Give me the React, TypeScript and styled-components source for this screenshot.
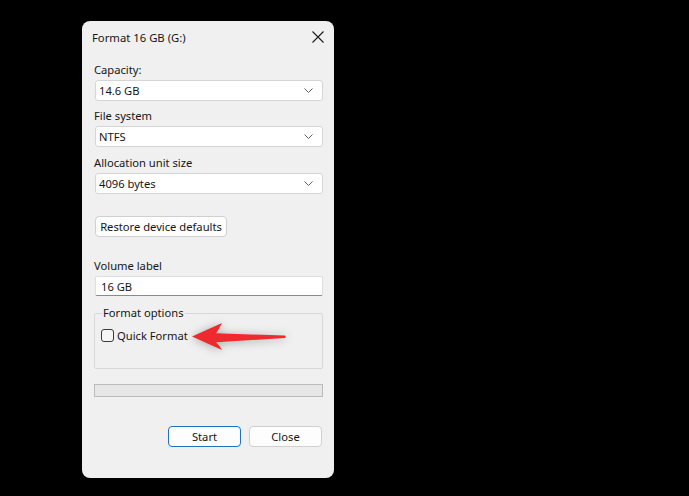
import React from "react";
import styled, { createGlobalStyle } from "styled-components";

const Global = createGlobalStyle`
  html, body { margin: 0; padding: 0; background: #000; }
  body { font-family: "Segoe UI", "Noto Sans", "Open Sans", sans-serif; }
  * { box-sizing: border-box; }
`;

const Page = styled.div`
  position: relative;
  width: 689px;
  height: 496px;
  background: #000;
  padding: 21px 0 0 82px;
`;

const Window = styled.div`
  width: 252px;
  height: 457px;
  background: #f0f0f0;
  border-radius: 8px;
  display: flex;
  flex-direction: column;
  color: #151515;
  font-size: 11.2px;
  overflow: hidden;
`;

const TitleBar = styled.div`
  height: 32px;
  display: flex;
  align-items: center;
  justify-content: space-between;
  padding: 0 10px 0 10px;
  font-size: 11.3px;
  color: #151515;
`;

const CloseGlyph = styled.svg`
  width: 12px;
  height: 12px;
`;

const Body = styled.div`
  display: flex;
  flex-direction: column;
  padding: 0 11px 0 12px;
`;

const Label = styled.div<{ $top: number }>`
  margin-top: ${(p) => p.$top}px;
  height: 16px;
  line-height: 16px;
  white-space: nowrap;
`;

const Combo = styled.div`
  margin-top: 2px;
  margin-left: 1px;
  height: 21px;
  background: #fff;
  border: 1px solid #d5d5d5;
  border-radius: 3px;
  display: flex;
  align-items: center;
  justify-content: space-between;
  padding: 0 9px 0 3px;
`;

const Chevron = styled.svg`
  width: 9px;
  height: 5px;
`;

const SmallButton = styled.button<{ $primary?: boolean; $width: number }>`
  width: ${(p) => p.$width}px;
  height: 21px;
  font: inherit;
  font-size: 11.2px;
  color: #151515;
  background: #fdfdfd;
  border: 1px solid ${(p) => (p.$primary ? "#1f72c0" : "#d0d0d0")};
  border-radius: 4px;
  padding: 0;
  white-space: nowrap;
  display: flex;
  align-items: center;
  justify-content: center;
`;

const RestoreRow = styled.div`
  margin-top: 22px;
  margin-left: 1px;
  display: flex;
`;

const TextInput = styled.div`
  margin-top: 2px;
  margin-left: 1px;
  height: 20px;
  background: #fff;
  border: 1px solid #dedede;
  border-bottom-color: #8a8a8a;
  border-radius: 2px;
  display: flex;
  align-items: center;
  padding-left: 5px;
`;

const GroupBox = styled.fieldset`
  margin: 10px 0 0 0;
  height: 63px;
  border: 1px solid #d8d8d8;
  border-radius: 2px;
  padding: 0 6px;
  display: flex;
  flex-direction: column;
  min-width: 0;
`;

const Legend = styled.legend`
  padding: 0 1px;
  margin-left: 1px;
  line-height: 14px;
`;

const CheckRow = styled.label`
  display: flex;
  align-items: center;
  gap: 3px;
  margin-top: 8px;
`;

const CheckBox = styled.span`
  width: 13px;
  height: 13px;
  border: 1px solid #3a3a3a;
  border-radius: 3px;
  background: #f6f6f6;
`;

const Progress = styled.div`
  margin-top: 15px;
  height: 13px;
  background: #e6e6e6;
  border: 1px solid #bcbcbc;
`;

const Footer = styled.div`
  margin-top: 29px;
  display: flex;
  justify-content: flex-end;
  gap: 8px;
  padding-right: 1px;
`;

const Arrow = styled.svg`
  position: absolute;
  left: 185px;
  top: 315px;
  width: 105px;
  height: 45px;
  overflow: visible;
  filter: drop-shadow(0 1px 5px rgba(0, 0, 0, 0.3));
`;

const ChevronIcon = () => (
  <Chevron viewBox="0 0 9 5">
    <polyline points="0.5,0.5 4.5,4.5 8.5,0.5" fill="none" stroke="#606060" strokeWidth="1" />
  </Chevron>
);

const ComboBox = ({ value }: { value: string }) => (
  <Combo>
    <span>{value}</span>
    <ChevronIcon />
  </Combo>
);

export default function App() {
  return (
    <>
      <Global />
      <Page>
        <Window>
          <TitleBar>
            <span>Format 16 GB (G:)</span>
            <CloseGlyph viewBox="0 0 12 12">
              <path d="M0.5 0.5 L11.5 11.5 M11.5 0.5 L0.5 11.5" stroke="#1b1b1b" strokeWidth="1.1" />
            </CloseGlyph>
          </TitleBar>
          <Body>
            <Label $top={9}>Capacity:</Label>
            <ComboBox value="14.6 GB" />
            <Label $top={7}>File system</Label>
            <ComboBox value="NTFS" />
            <Label $top={8}>Allocation unit size</Label>
            <ComboBox value="4096 bytes" />
            <RestoreRow>
              <SmallButton $width={132}>Restore device defaults</SmallButton>
            </RestoreRow>
            <Label $top={21}>Volume label</Label>
            <TextInput>16 GB</TextInput>
            <GroupBox>
              <Legend>Format options</Legend>
              <CheckRow>
                <CheckBox />
                <span>Quick Format</span>
              </CheckRow>
            </GroupBox>
            <Progress />
            <Footer>
              <SmallButton $primary $width={73}>Start</SmallButton>
              <SmallButton $width={73}>Close</SmallButton>
            </Footer>
          </Body>
        </Window>
        <Arrow viewBox="0 0 105 45">
          <path
            d="M7 21.5 L37 8 Q34 14 31 18.3 L100 20.6 Q101.5 21.8 100 23 L31 27.3 Q34 30 37 35 Z"
            fill="#ee2a2e"
          />
        </Arrow>
      </Page>
    </>
  );
}
